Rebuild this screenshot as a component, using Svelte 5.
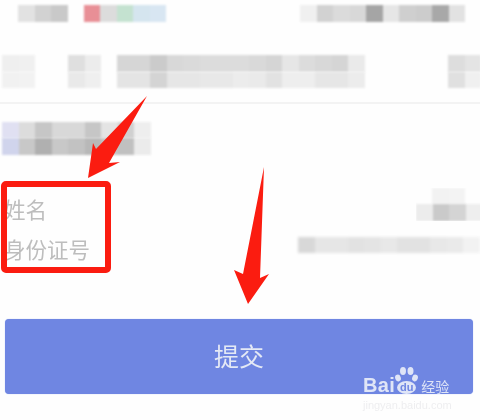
<script>
  const top1 = ['e2e2e2', 'd2d2d2', 'c9c9c9'];
  const top2 = ['e88f96', 'dcdcdc', 'c4e2d0', 'd5e5ef', 'd8e6f2'];
  const top3 = ['f0f0f0', 'd2d2d2', 'dbdbdb', 'd8d8d8', 'a5a5a5', 'e6e6e6', 'cfcfcf', 'cccccc', 'a8a8a8', 'e2e2e2'];
  const a1 = ['efefef', 'f0f0f0'];
  const a2 = ['f1f1f1', 'f2f2f2'];
  const b1 = ['dfdfdf', 'ececec'];
  const b2 = ['e9e9e9', 'efefef'];
  const c1 = ['d6d6d6', 'd6d6d6', 'cbcbcb', 'd8d8d8', 'dadada', 'dcdcdc', 'dcdcdc', 'dcdcdc', 'd9d9d9', 'd5d5d5', 'e6e6e6', 'dcdcdc', 'd8d8d8', 'd5d5d5', 'eaeaea'];
  const c2 = ['e4e4e4', 'e4e4e4', 'd4d4d4', 'e6e6e6', 'e6e6e6', 'e8e8e8', 'e8e8e8', 'ececec', 'eaeaea', 'e2e2e2', 'eeeeee', 'eeeeee', 'e6e6e6', 'e6e6e6', 'ececec'];
  const d1 = ['dddddd', 'e4e4e4'];
  const d2 = ['e0e0e0', 'f0f0f0'];
  const e1 = ['e0e0f2', 'dcdcdc', 'c6c6c6', 'd8d8d8', 'd8d8d8', 'c6c6c6', 'e4e4e4', 'd0d0d0', 'eeeeee'];
  const e2 = ['d0d4ec', 'c8c8c8', 'b0b0b0', 'c8c8c8', 'c2c2c2', 'b8b8b8', 'c4c4c4', 'c0c0c0', 'ebebeb'];
  const f1 = ['f2f2f2', 'f3f3f3'];
  const f2 = ['ececec', 'cacaca', 'd4d4d4', 'eeeeee'];
  const g = ['d8d8d8', 'e6e6e6', 'e6e6e6', 'e2e2e2', 'e4e4e4', 'e8e8e8', 'e2e2e2', 'e2e2e2', 'e8e8e8', 'eaeaea', 'f2f2f2'];
</script>

{#snippet strip(cells)}
  <div class="strip">
    {#each cells as c}
      <span class="cell" style="background:#{c}"></span>
    {/each}
  </div>
{/snippet}

<div class="page">
  <div class="row top">
    <div class="group">
      {@render strip(top1)}
      {@render strip(top2)}
    </div>
    {@render strip(top3)}
  </div>

  <div class="row second">
    <div class="block">{@render strip(a1)}{@render strip(a2)}</div>
    <div class="block">{@render strip(b1)}{@render strip(b2)}</div>
    <div class="block">{@render strip(c1)}{@render strip(c2)}</div>
    <div class="block end">{@render strip(d1)}{@render strip(d2)}</div>
  </div>

  <div class="divider"></div>

  <div class="block third">{@render strip(e1)}{@render strip(e2)}</div>

  <div class="form">
    <div class="labels">
      <div class="label">姓名</div>
      <div class="label">身份证号</div>
    </div>
    <div class="values">
      <div class="short">
        <div class="inset">{@render strip(f1)}</div>
        {@render strip(f2)}
      </div>
      <div class="long">{@render strip(g)}</div>
    </div>
  </div>

  <button class="submit">提交</button>

  <div class="redbox"></div>

  <svg class="arrows" width="480" height="420" viewBox="0 0 480 420" aria-hidden="true">
    <path d="M147 96 L109 163 L120 162 L88 178 L93 143 L96 149 Z" fill="#fb1c10" />
    <path d="M264 167 L260 278 L269 274 L248 304 L234 270 L243 274 Z" fill="#fb1c10" />
  </svg>

  <div class="mark">
    <div class="brand">
      <span class="bai">Bai</span>
      <span class="logo">
        <svg width="26" height="20" viewBox="0 0 26 20" aria-hidden="true">
          <ellipse cx="5" cy="12" rx="2.8" ry="3.4" fill="#dfe5f7" transform="rotate(-20 5 12)" />
          <ellipse cx="10" cy="5" rx="3" ry="4" fill="#dfe5f7" />
          <ellipse cx="17.5" cy="5" rx="3" ry="4" fill="#dfe5f7" />
          <ellipse cx="22" cy="12" rx="2.8" ry="3.4" fill="#dfe5f7" transform="rotate(20 22 12)" />
        </svg>
        <span class="du">du</span>
      </span>
      <span class="jy">经验</span>
    </div>
    <div class="url">jingyan.baidu.com</div>
  </div>
</div>

<style>
  :global(body) {
    margin: 0;
    background: #fefefe;
  }

  .page {
    position: relative;
    width: 480px;
    height: 420px;
    overflow: hidden;
    padding-top: 5px;
    box-sizing: border-box;
    font-family: "Noto Sans CJK SC", "Liberation Sans", sans-serif;
  }

  .strip {
    display: flex;
    height: 16.5px;
    filter: blur(0.9px);
  }

  .cell {
    flex: 0 0 16.5px;
    width: 16.5px;
  }

  .row {
    display: flex;
  }

  .top {
    justify-content: space-between;
    padding: 0 15px 0 18px;
    height: 17px;
  }

  .group {
    display: flex;
    gap: 16px;
  }

  .second {
    margin-top: 33px;
    padding-left: 2px;
    gap: 33px;
    height: 33px;
  }

  .second .block:nth-child(3) {
    margin-left: -17px;
  }

  .second .end {
    margin-left: auto;
    margin-right: -1px;
    width: 33px;
  }

  .divider {
    margin-top: 14px;
    height: 1.5px;
    background: #f3f3f3;
  }

  .third {
    margin-top: 18px;
    padding-left: 2px;
    height: 33px;
  }

  .form {
    display: flex;
    justify-content: space-between;
    margin-top: 33px;
    height: 83px;
  }

  .labels {
    padding: 1px 0 0 4px;
  }

  .label {
    font-size: 21.5px;
    line-height: 40px;
    color: #bdbdbd;
    filter: blur(0.5px);
  }

  .values {
    display: flex;
    flex-direction: column;
    align-items: flex-end;
    gap: 16px;
  }

  .short {
    width: 64px;
    overflow: hidden;
  }

  .inset {
    margin-left: 16px;
  }

  .long {
    margin-right: 2px;
    width: 180px;
  }

  .long .strip {
    filter: blur(1.4px);
  }

  .submit {
    display: block;
    width: 468px;
    height: 75px;
    margin: 48px 0 0 5px;
    padding: 0 0 2px;
    border: 0;
    border-radius: 4px;
    background: #6f86e2;
    box-shadow: 0 0 1px #9db0f0;
    color: #e4e9f5;
    font-family: inherit;
    font-size: 25px;
    filter: blur(0.4px);
  }

  .redbox {
    position: absolute;
    left: 1px;
    top: 181px;
    width: 110px;
    height: 92px;
    box-sizing: border-box;
    border: 6px solid #fb1c10;
    border-radius: 5px;
  }

  .arrows {
    position: absolute;
    left: 0;
    top: 0;
    pointer-events: none;
  }

  .mark {
    position: absolute;
    left: 363px;
    top: 366px;
    width: 92px;
    filter: blur(0.5px);
    font-family: "Liberation Sans", "Noto Sans CJK SC", sans-serif;
  }

  .brand {
    display: flex;
    align-items: flex-end;
    height: 29px;
    color: #dfe5f7;
  }

  .bai {
    font-size: 20px;
    font-weight: 700;
    line-height: 20px;
    letter-spacing: 0.4px;
  }

  .logo {
    position: relative;
    width: 26px;
    height: 29px;
    margin-left: -2px;
  }

  .logo svg {
    position: absolute;
    left: 0;
    top: 0;
  }

  .du {
    position: absolute;
    left: 4px;
    top: 15px;
    width: 19px;
    height: 13px;
    border-radius: 50%;
    background: #dfe5f7;
    color: #6f86e2;
    font-size: 11px;
    font-weight: 700;
    line-height: 12px;
    text-align: center;
  }

  .jy {
    font-family: "Noto Sans CJK SC", sans-serif;
    font-size: 14px;
    line-height: 17px;
    margin-left: 2px;
  }

  .url {
    margin-top: 4px;
    font-size: 11px;
    line-height: 12px;
    color: #eeeef0;
    white-space: nowrap;
  }
</style>
